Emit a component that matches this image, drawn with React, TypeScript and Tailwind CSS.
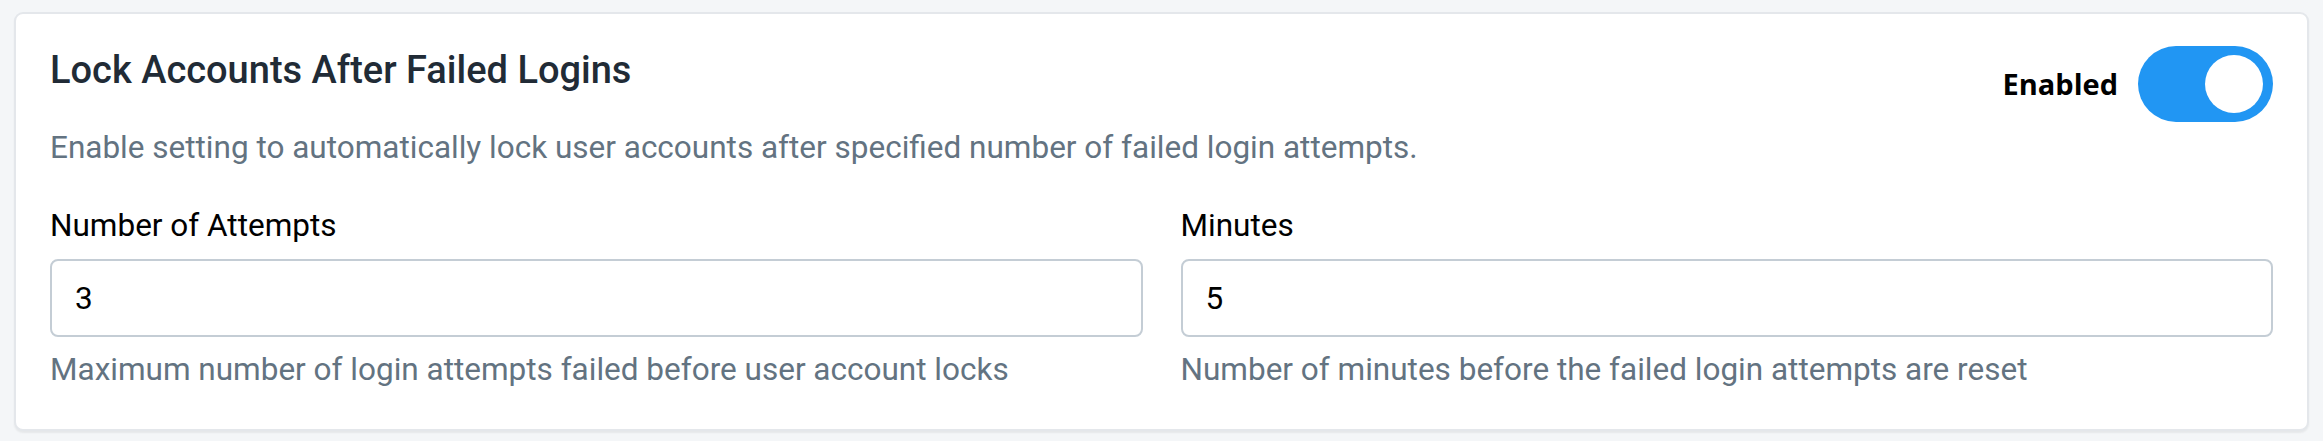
import { useState } from "react";

function Toggle({ on, onChange }: { on: boolean; onChange: (v: boolean) => void }) {
  return (
    <button
      type="button"
      onClick={() => onChange(!on)}
      className={`flex h-[76px] w-[135px] shrink-0 items-center rounded-full px-[10px] transition-colors ${
        on ? "justify-end bg-[#2196f3]" : "justify-start bg-[#c4cdd5]"
      }`}
    >
      <span className="h-[58px] w-[58px] rounded-full bg-white" />
    </button>
  );
}

function Field({ label, value, help }: { label: string; value: string; help: string }) {
  return (
    <div className="flex min-w-0 flex-1 flex-col">
      <label className="text-[31.5px] leading-[46px] text-black">{label}</label>
      <input
        defaultValue={value}
        className="mt-[10px] h-[78px] w-full rounded-[8px] border-2 border-[#c4cdd5] bg-white px-[23px] text-[31.5px] text-black outline-none"
      />
      <p className="mt-[10px] text-[31.5px] leading-[46px] text-[#637381]">{help}</p>
    </div>
  );
}

export default function App() {
  const [enabled, setEnabled] = useState(true);

  return (
    <div
      className="min-h-[441px] w-full bg-[#f4f6f8] px-[14px] pt-[12px]"
      style={{ fontFamily: "Roboto, 'Liberation Sans', sans-serif" }}
    >
      <div className="rounded-[9px] border-2 border-[#e4e7eb] bg-white px-[34px] pt-[34px] pb-[36px] shadow-[0_2px_2px_rgba(0,0,0,0.06)]">
        {/* Header */}
        <div className="flex items-start justify-between gap-6">
          <div className="min-w-0">
            <h2 className="text-[38px] font-medium leading-[44px] text-[#212b36]">
              Lock Accounts After Failed Logins
            </h2>
            <p className="mt-[33px] text-[31.5px] leading-[46px] text-[#637381]">
              Enable setting to automatically lock user accounts after specified number of failed login attempts.
            </p>
          </div>
          <div className="-mt-[2px] flex items-center gap-[20px]">
            <span
              className="text-[29px] font-bold text-black"
              style={{ fontFamily: "'Open Sans', 'Noto Sans', sans-serif" }}
            >
              Enabled
            </span>
            <Toggle on={enabled} onChange={setEnabled} />
          </div>
        </div>

        {/* Fields */}
        <div className="mt-[32px] flex gap-[38px]">
          <Field
            label="Number of Attempts"
            value="3"
            help="Maximum number of login attempts failed before user account locks"
          />
          <Field
            label="Minutes"
            value="5"
            help="Number of minutes before the failed login attempts are reset"
          />
        </div>
      </div>
    </div>
  );
}
